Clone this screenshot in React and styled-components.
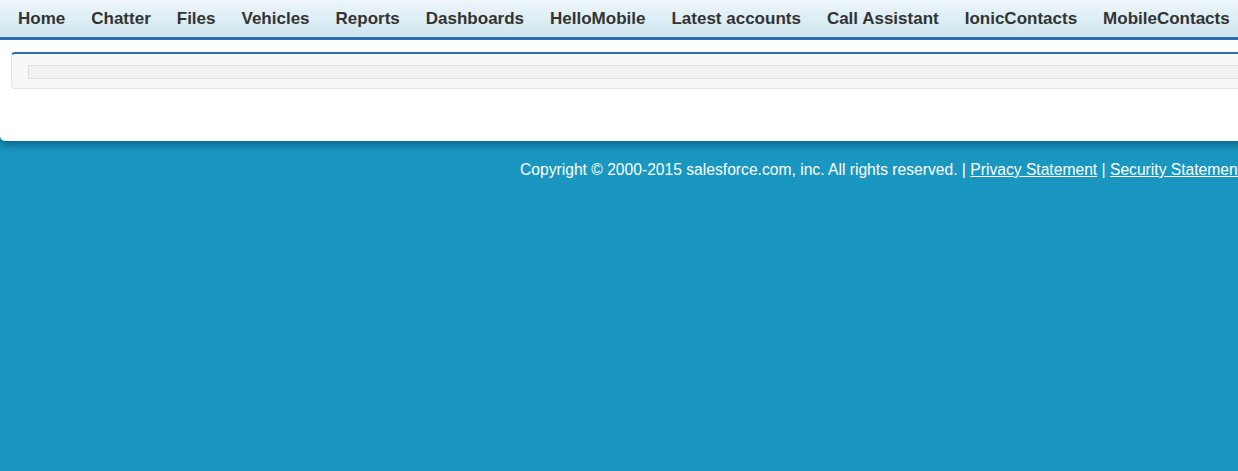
import React from 'react';
import styled, { createGlobalStyle } from 'styled-components';

const Global = createGlobalStyle`
  html, body {
    margin: 0;
    padding: 0;
    background: #1997c1;
    overflow: hidden;
    font-family: Arial, "Liberation Sans", Helvetica, sans-serif;
  }
`;

const Page = styled.div`
  width: 1238px;
  height: 471px;
  overflow: hidden;
  background: #1997c1;
`;

const Sheet = styled.div`
  width: 1400px;
  background: #fff;
  border-radius: 0 0 0 5px;
  box-shadow: 0 4px 8px rgba(0, 60, 90, 0.55);
  padding-bottom: 52px;
`;

const Tabs = styled.ul`
  list-style: none;
  margin: 0;
  padding: 0 0 0 5px;
  display: flex;
  height: 37px;
  align-items: center;
  background: linear-gradient(#edf6fa, #cfe6f0);
  border-bottom: 3px solid #2a6cb0;
`;

const Tab = styled.li`
  padding: 0 13px;
  font-size: 17px;
  font-weight: bold;
  color: #333;
  white-space: nowrap;
  line-height: 38px;
`;

const Body = styled.div`
  padding: 12px 0 0 11px;
`;

const Block = styled.div`
  background: #f8f8f8;
  border: 1px solid #e3e3e3;
  border-top: 2px solid #2a6cb0;
  border-radius: 4px 0 0 4px;
  padding: 11px 0 9px 16px;
`;

const Bar = styled.div`
  height: 12px;
  background: #f1f1f1;
  border: 1px solid #dfdfdf;
`;

const Footer = styled.div`
  padding: 20px 0 0 520px;
  color: #fff;
  font-size: 15.65px;
  white-space: nowrap;
  line-height: 18px;
`;

const Link = styled.a`
  color: #fff;
  text-decoration: underline;
`;

const tabs = ['Home', 'Chatter', 'Files', 'Vehicles', 'Reports', 'Dashboards', 'HelloMobile', 'Latest accounts', 'Call Assistant', 'IonicContacts', 'MobileContacts'];

export default function App() {
  return (
    <Page>
      <Global />
      <Sheet>
        <Tabs>
          {tabs.map(t => <Tab key={t}>{t}</Tab>)}
        </Tabs>
        <Body>
          <Block>
            <Bar />
          </Block>
        </Body>
      </Sheet>
      <Footer>
        Copyright © 2000-2015 salesforce.com, inc. All rights reserved. | <Link href="#">Privacy Statement</Link> | <Link href="#">Security Statement</Link>
      </Footer>
    </Page>
  );
}
